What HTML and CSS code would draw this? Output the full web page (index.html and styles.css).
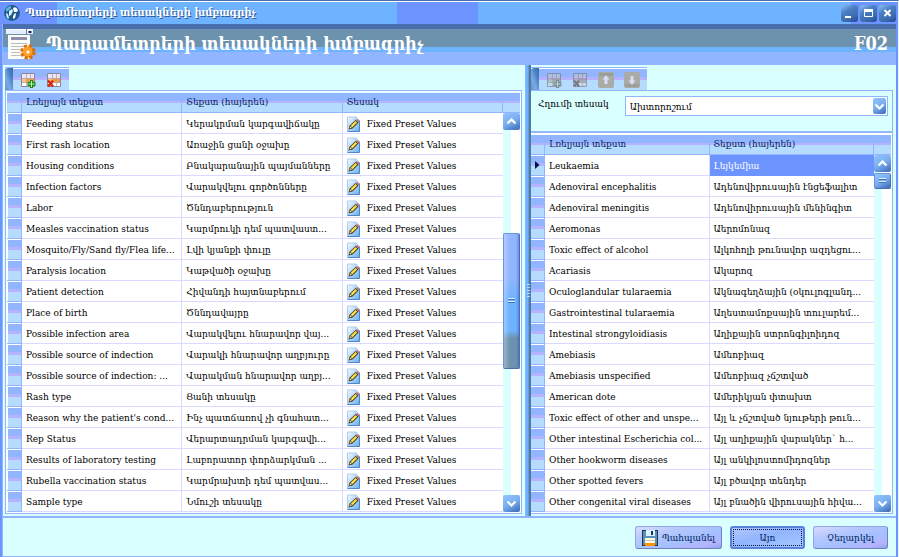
FILE: index.html
```html
<!DOCTYPE html>
<html lang="hy">
<head>
<meta charset="utf-8">
<meta name="viewport" content="width=device-width, initial-scale=1">
<title>Պարամետրերի տեսակների խմբագրիչ</title>
<link rel="stylesheet" href="styles.css">
</head>
<body>
<svg class="defs" aria-hidden="true">
  <defs>
    <linearGradient id="page-fill" x1="0" y1="0" x2="1" y2="1">
      <stop offset="0" stop-color="#f4fbff"/><stop offset="1" stop-color="#6aaef0"/>
    </linearGradient>
    <symbol id="edit" viewBox="0 0 13 16">
      <path d="M.5 1h8.500l3.500 3.500v11H.5z" fill="url(#page-fill)" stroke="#a9cdf0"/>
      <path d="M12.500 4.500v11H.5" fill="none" stroke="#4a86c8"/>
      <path d="M9 1v3.500h3.500z" fill="#fff" stroke="#8bb8e0" stroke-width=".6"/>
      <path d="M1.500 13.500l1.200-4 6-5.500 2.800 2.500-6 6z" fill="#3b3318"/>
      <path d="M3.600 9.800l5-4.800 1.600 1.500-5 5z" fill="#ffe14a"/>
      <path d="M8.800 4l1.200-1.200 2.500 2.400-1.200 1.200z" fill="#c76a7e"/>
      <path d="M3.200 10.200l1.600 1.500-2.300.9z" fill="#f8e4b8"/>
    </symbol>
    <symbol id="grid-base" viewBox="0 0 15 15">
      <path d="M.5.5h13v13H.5z" fill="#fff" stroke="#8b8797"/>
      <path d="M1 5h12v5H1z" fill="#f9c583"/>
      <path d="M5 5h8v5H5z" fill="#f59a45"/>
      <path d="M1 1h12v4H1z" fill="#e9e6fa"/>
      <path d="M5.500 1v12M9.500 1v12M1 5.500h12M1 9.500h12" stroke="#b9a6a6" fill="none" stroke-width=".8"/>
    </symbol>
    <symbol id="grid-add" viewBox="0 0 15 15">
      <use href="#grid-base" width="15" height="15"/>
      <path d="M9 7h3v2h2.500v4H12v2H9v-2H6.500V9H9z" fill="#1c8a1e"/>
      <path d="M10 8h1v2.500h2.500v1H11V14h-1v-2.500H7.500v-1H10z" fill="#b4ff9c"/>
    </symbol>
    <symbol id="grid-del" viewBox="0 0 15 15">
      <use href="#grid-base" width="15" height="15"/>
      <path d="M1 7.500l5 6M6 7.500l-5 6" stroke="#d62a12" stroke-width="2.400"/>
    </symbol>
    <symbol id="arrow-tile" viewBox="0 0 16 16">
      <rect width="16" height="16" rx="2" fill="#a9aca6"/>
      <path d="M1 1h14v3H1z" fill="#9a9e98"/>
      <path d="M8 3l3.500 4.500H9.500V12h-3V7.500h-2z" fill="#dcdcf5"/>
    </symbol>
    <symbol id="chev-down" viewBox="0 0 11 7">
      <path d="M1.500 1.500l4 4 4-4" fill="none" stroke="#fff" stroke-width="2.200"/>
    </symbol>
  </defs>
</svg>

<div class="window">
  <header class="titlebar">
    <svg class="globe" viewBox="0 0 16 16" aria-hidden="true">
      <circle cx="8" cy="8" r="7.900" fill="#1f5a8e"/>
      <path d="M2 4q2-3 5-3l0 2-3 3-2 1z" fill="#5fb4d8"/>
      <path d="M9 3q3-2 5 2l-1 2-3 0z" fill="#fff"/>
      <path d="M5 6l3-2 1 2-2 4-2 1z" fill="#d7f6ff"/>
      <path d="M2 8l2 1 1 4-1 1q-2-2-2-6z" fill="#c9f4ff"/>
      <path d="M9 11l2-3 1 1-1 4-2 1z" fill="#fff"/>
    </svg>
    <h1 class="caption">Պարամետրերի տեսակների խմբագրիչ</h1>
    <div class="controls">
      <button class="wbtn" aria-label="Minimize"><svg viewBox="0 0 17 17"><path d="M4 11h6v2H4z" fill="#fff"/></svg></button>
      <button class="wbtn" aria-label="Maximize"><svg viewBox="0 0 17 17"><path d="M4.500 4.500h8v7h-8z" fill="none" stroke="#fff"/><path d="M4 4h9v3H4z" fill="#fff"/></svg></button>
      <button class="wbtn" aria-label="Close"><svg viewBox="0 0 17 17"><path d="M5.500 5l6 6M11.500 5l-6 6" stroke="#fff" stroke-width="2"/></svg></button>
    </div>
  </header>

  <div class="frame">
    <div class="banner">
      <svg class="banner-icon" viewBox="0 0 30 32" aria-hidden="true">
        <path d="M0 1h27v5H0z" fill="#e6efff"/><path d="M0 1h27v1H0z" fill="#fff"/>
        <path d="M20 1h1v5h-1z" fill="#6a7ca8"/><path d="M22.500 3h3v2h-3z" fill="#1b2440"/>
        <path d="M2 7h22v24H2z" fill="#fbfbf7"/>
        <path d="M5 9h16v3H5z" fill="#8e90ac"/>
        <path d="M5 15.500h16M5 18.500h13M5 21.500h10M5 24.500h9M5 27.500h10" stroke="#b9bfc0" fill="none"/>
        <circle cx="22" cy="24" r="5.500" fill="#f48a10"/>
        <circle cx="22" cy="24" r="6" fill="none" stroke="#d96f00" stroke-width="3.400" stroke-dasharray="3 1.710"/>
        <circle cx="21.500" cy="23.500" r="4.800" fill="#ffa02c"/>
        <circle cx="22" cy="24" r="1.600" fill="#fff"/>
      </svg>
      <h2 class="banner-title">Պարամետրերի տեսակների խմբագրիչ</h2>
      <span class="banner-code">F02</span>
    </div>

    <main class="panes">
      <section class="pane">
        <div class="toolbar">
          <span class="grip"></span>
          <button class="tool" aria-label="Ավելացնել"><svg viewBox="0 0 15 15"><use href="#grid-add"/></svg></button>
          <button class="tool" aria-label="Ջնջել"><svg viewBox="0 0 15 15"><use href="#grid-del"/></svg></button>
        </div>
        <div class="box">
          <div class="gridview">
            <table class="grid">
              <colgroup><col class="c-ind"><col><col><col></colgroup>
              <thead><tr><th></th><th>Լռելյայն տեքստ</th><th>Տեքստ (հայերեն)</th><th>Տեսակ</th></tr></thead>
              <tbody>
                <tr><th></th><td>Feeding status</td><td>Կերակրման կարգավիճակը</td><td><svg class="ed"><use href="#edit"/></svg>Fixed Preset Values</td></tr>
                <tr><th></th><td>First rash location</td><td>Առաջին ցանի օջախը</td><td><svg class="ed"><use href="#edit"/></svg>Fixed Preset Values</td></tr>
                <tr><th></th><td>Housing conditions</td><td>Բնակարանային պայմանները</td><td><svg class="ed"><use href="#edit"/></svg>Fixed Preset Values</td></tr>
                <tr><th></th><td>Infection factors</td><td>Վարակվելու գործոնները</td><td><svg class="ed"><use href="#edit"/></svg>Fixed Preset Values</td></tr>
                <tr><th></th><td>Labor</td><td>Ծննդաբերություն</td><td><svg class="ed"><use href="#edit"/></svg>Fixed Preset Values</td></tr>
                <tr><th></th><td>Measles vaccination status</td><td>Կարմրուկի դեմ պատվաստ...</td><td><svg class="ed"><use href="#edit"/></svg>Fixed Preset Values</td></tr>
                <tr><th></th><td>Mosquito/Fly/Sand fly/Flea life...</td><td>Լվի կյանքի փուլը</td><td><svg class="ed"><use href="#edit"/></svg>Fixed Preset Values</td></tr>
                <tr><th></th><td>Paralysis location</td><td>Կաթվածի օջախը</td><td><svg class="ed"><use href="#edit"/></svg>Fixed Preset Values</td></tr>
                <tr><th></th><td>Patient detection</td><td>Հիվանդի հայտնաբերում</td><td><svg class="ed"><use href="#edit"/></svg>Fixed Preset Values</td></tr>
                <tr><th></th><td>Place of birth</td><td>Ծննդավայրը</td><td><svg class="ed"><use href="#edit"/></svg>Fixed Preset Values</td></tr>
                <tr><th></th><td>Possible infection area</td><td>Վարակվելու հնարավոր վայ...</td><td><svg class="ed"><use href="#edit"/></svg>Fixed Preset Values</td></tr>
                <tr><th></th><td>Possible source of indection</td><td>Վարակի հնարավոր աղբյուրը</td><td><svg class="ed"><use href="#edit"/></svg>Fixed Preset Values</td></tr>
                <tr><th></th><td>Possible source of indection: ...</td><td>Վարակման հնարավոր աղբյ...</td><td><svg class="ed"><use href="#edit"/></svg>Fixed Preset Values</td></tr>
                <tr><th></th><td>Rash type</td><td>Ցանի տեսակը</td><td><svg class="ed"><use href="#edit"/></svg>Fixed Preset Values</td></tr>
                <tr><th></th><td>Reason why the patient's cond...</td><td>Ինչ պատճառով չի գնահատ...</td><td><svg class="ed"><use href="#edit"/></svg>Fixed Preset Values</td></tr>
                <tr><th></th><td>Rep Status</td><td>Վերարտադրման կարգավի...</td><td><svg class="ed"><use href="#edit"/></svg>Fixed Preset Values</td></tr>
                <tr><th></th><td>Results of laboratory testing</td><td>Լաբորատոր փորձարկման ...</td><td><svg class="ed"><use href="#edit"/></svg>Fixed Preset Values</td></tr>
                <tr><th></th><td>Rubella vaccination status</td><td>Կարմրախտի դեմ պատվաս...</td><td><svg class="ed"><use href="#edit"/></svg>Fixed Preset Values</td></tr>
                <tr><th></th><td>Sample type</td><td>Նմուշի տեսակը</td><td><svg class="ed"><use href="#edit"/></svg>Fixed Preset Values</td></tr>
              </tbody>
            </table>
            <div class="scroll">
              <div class="cap"></div>
              <button class="sbtn up" aria-label="Վեր"><svg viewBox="0 0 11 7"><use href="#chev-down"/></svg></button>
              <div class="track track-left"><div class="thumb"></div></div>
              <button class="sbtn" aria-label="Վար"><svg viewBox="0 0 11 7"><use href="#chev-down"/></svg></button>
            </div>
          </div>
        </div>
      </section>

      <div class="splitter"><span class="dots"></span></div>

      <section class="pane pane-right">
        <div class="toolbar">
          <span class="grip"></span>
          <button class="tool off" disabled aria-label="Ավելացնել"><svg viewBox="0 0 15 15"><use href="#grid-add"/></svg></button>
          <button class="tool off" disabled aria-label="Ջնջել"><svg viewBox="0 0 15 15"><use href="#grid-del"/></svg></button>
          <button class="tool" disabled aria-label="Վեր"><svg class="tile" viewBox="0 0 16 16"><use href="#arrow-tile"/></svg></button>
          <button class="tool" disabled aria-label="Վար"><svg class="tile flip" viewBox="0 0 16 16"><use href="#arrow-tile"/></svg></button>
        </div>
        <div class="box box-right">
          <div class="filter">
            <label for="ref">Հղումի տեսակ</label>
            <div class="combo">
              <select id="ref"><option>Ախտորոշում</option></select>
              <span class="combo-btn"><svg viewBox="0 0 11 7"><use href="#chev-down"/></svg></span>
            </div>
          </div>
          <div class="gridview">
            <table class="grid">
              <colgroup><col class="c-ind"><col><col></colgroup>
              <thead><tr><th></th><th>Լռելյայն տեքստ</th><th>Տեքստ (հայերեն)</th></tr></thead>
              <tbody>
                <tr><th><svg class="cursor" viewBox="0 0 5 8"><path d="M0 0l4.500 4L0 8z" fill="#00144a"/></svg></th><td>Leukaemia</td><td class="selected">Լեյկեմիա</td></tr>
                <tr><th></th><td>Adenoviral encephalitis</td><td>Ադենովիրուսային էնցեֆալիտ</td></tr>
                <tr><th></th><td>Adenoviral meningitis</td><td>Ադենովիրուսային մենինգիտ</td></tr>
                <tr><th></th><td>Aeromonas</td><td>Աերոմոնազ</td></tr>
                <tr><th></th><td>Toxic effect of alcohol</td><td>Ալկոհոլի թունավոր ազդեցու...</td></tr>
                <tr><th></th><td>Acariasis</td><td>Ակարոզ</td></tr>
                <tr><th></th><td>Oculoglandular tularaemia</td><td>Ակնագեղձային (օկուլոգլանդ...</td></tr>
                <tr><th></th><td>Gastrointestinal tularaemia</td><td>Աղեստամոքսային տուլարեմ...</td></tr>
                <tr><th></th><td>Intestinal strongyloidiasis</td><td>Աղիքային ստրոնգիլոիդոզ</td></tr>
                <tr><th></th><td>Amebiasis</td><td>Ամեոբիազ</td></tr>
                <tr><th></th><td>Amebiasis unspecified</td><td>Ամեոբիազ չճշտված</td></tr>
                <tr><th></th><td>American dote</td><td>Ամերիկյան փտախտ</td></tr>
                <tr><th></th><td>Toxic effect of other and unspe...</td><td>Այլ և չճշտված նյութերի թուն...</td></tr>
                <tr><th></th><td>Other intestinal Escherichia col...</td><td>Այլ աղիքային վարակներ` հ...</td></tr>
                <tr><th></th><td>Other hookworm diseases</td><td>Այլ անկիլոստոմիդոզներ</td></tr>
                <tr><th></th><td>Other spotted fevers</td><td>Այլ բծավոր տենդեր</td></tr>
                <tr><th></th><td>Other congenital viral diseases</td><td>Այլ բնածին վիրուսային հիվա...</td></tr>
              </tbody>
            </table>
            <div class="scroll">
              <div class="cap"></div>
              <button class="sbtn up" aria-label="Վեր"><svg viewBox="0 0 11 7"><use href="#chev-down"/></svg></button>
              <div class="track"><div class="thumb thumb-small"></div></div>
              <button class="sbtn" aria-label="Վար"><svg viewBox="0 0 11 7"><use href="#chev-down"/></svg></button>
            </div>
          </div>
        </div>
      </section>
    </main>

    <footer class="actions">
      <button class="btn btn-save">
        <svg viewBox="0 0 16 16" aria-hidden="true">
          <path d="M0 0h16v16H0z" fill="#1d3352"/><path d="M1 1h14v14H1z" fill="#5d8fb8"/>
          <path d="M4 0h9v6H4z" fill="#d8f4ff"/><path d="M9 1h2v4H9z" fill="#1d3352"/>
          <path d="M3 8h10v8H3z" fill="#fffbe0"/><path d="M3 10h10v1H3z" fill="#c8cdb0"/>
          <path d="M3 13h10v3H3z" fill="#ff9200"/>
        </svg>Պահպանել</button>
      <button class="btn btn-default">Այո</button>
      <button class="btn">Չեղարկել</button>
    </footer>
  </div>
</div>
</body>
</html>
```
FILE: styles.css
```css
:root {
  --line: #92b5ff;
  --deep: #6d93ff;
  --sky: #6db3ff;
  --pale: #b5dbff;
  --lilac: #b5b3ff;
  --row-line: #dad9ff;
  --surface: #daffff;
  --navy: #00245a;
  --band: linear-gradient(var(--line) 0 42%, var(--lilac) 42% 54%, var(--pale) 54%);
  --tile: linear-gradient(150deg, #92c5ff 0, #7aaeee 50%, #4a7cc8 85%, #4a6dad 100%);
}

* { box-sizing: border-box; }

body {
  margin: 0;
  font: 10px/14px "DejaVu Serif Condensed", "DejaVu Serif", serif;
  color: #000;
  background: var(--surface);
}

button, select {
  font: inherit;
  color: inherit;
  margin: 0;
  padding: 0;
  border: 0;
  background: none;
}

svg { display: block; }
.defs { position: absolute; width: 0; height: 0; }

.window {
  border-top: 1px solid #4a6dad;
  border-right: 1px solid #eaf4ff;
  background: var(--deep);
  min-height: 100vh;
}

.titlebar {
  display: flex;
  align-items: center;
  height: 23px;
  padding: 0 2px 0 4px;
  border-top: 1px solid #fff;
  background: linear-gradient(90deg, var(--deep) 57px, var(--sky) 57px 397px, var(--deep) 397px 478px, var(--sky) 478px calc(100% - 47px), var(--deep) calc(100% - 47px));
}
.globe { width: 16px; height: 16px; }
.caption {
  flex: 1;
  margin: 0 0 0 5px;
  font-size: 11px;
  line-height: 16px;
  font-weight: bold;
  color: #fff;
  text-shadow: 1px 1px 0 #2f5596;
}
.controls { display: flex; gap: 2px; }
.wbtn {
  width: 17px;
  height: 17px;
  border-radius: 3px;
  background: linear-gradient(150deg, #8fc0f5 0, #4a80c4 35%, #3c6cae 70%, #24499a 100%);
}

.frame {
  margin: 0 2px;
  border-left: 1px solid var(--line);
  background: var(--surface);
}

.banner {
  display: flex;
  align-items: flex-start;
  height: 41px;
  padding: 4px 8px 0 3px;
  background: linear-gradient(#4a6dad 0 5px, #6d92ad 5px 23px, var(--sky) 23px 28px, var(--line) 28px);
}
.banner-icon { width: 30px; height: 32px; }
.banner-title, .banner-code {
  margin: 0;
  font-size: 18px;
  line-height: 32px;
  font-weight: bold;
  color: #fff;
  white-space: nowrap;
}
.banner-title { flex: 1; margin-left: 10px; }

.panes {
  display: grid;
  grid-template-columns: minmax(0, 522fr) 6px minmax(0, 365fr);
  border-bottom: 2px solid var(--line);
}
.pane { padding: 2px 3px 2px 2px; }
.pane-right { padding-left: 0; }

.toolbar {
  display: flex;
  align-items: stretch;
  width: fit-content;
  height: 23px;
  padding-right: 4px;
  border-top: 1px solid var(--line);
  box-shadow: inset 0 1px #fff;
  background: var(--band);
}
.grip {
  width: 8px;
  border-radius: 3px 0 0 0;
  background: linear-gradient(70deg, #6d93c8 0, #7aa8e8 35%, #4a80c0 70%, #3c68a0);
}
.tool {
  display: flex;
  align-items: center;
  justify-content: flex-end;
  width: 26px;
  padding: 2px 3px 0 0;
}
.tool svg { width: 15px; height: 15px; }
.tool .tile { width: 16px; height: 16px; }
.tool .flip { transform: rotate(180deg); }
.off svg { filter: grayscale(.85) brightness(.85); opacity: .6; }

.box {
  border: 1px solid var(--line);
  box-shadow: inset 0 0 0 1px #fff;
  padding: 2px 1px 1px 1px;
}
.box-right { border-left: 0; padding: 0; box-shadow: none; }
.box-right .gridview { border-top: 2px solid var(--line); padding: 2px 1px 1px 0; background: #fff; }

.gridview {
  display: grid;
  grid-template-columns: minmax(0, 1fr) 17px;
}
.grid {
  width: 100%;
  border-collapse: separate;
  border-spacing: 0;
  table-layout: fixed;
  background: #fff;
}
.c-ind { width: 15px; }
.pane-right .c-ind { width: 14px; }
.grid th, .grid td {
  height: 21px;
  padding: 2px 4px 0;
  font-weight: normal;
  text-align: left;
  white-space: nowrap;
  overflow: hidden;
  border-right: 1px solid var(--row-line);
  border-bottom: 1px solid var(--row-line);
}
.grid td:last-child { border-right: 0; padding-right: 0; }
.grid thead th {
  height: 20px;
  padding: 0 4px 2px;
  color: var(--navy);
  background: var(--band);
  border-color: var(--line);
}
.grid tbody th {
  padding: 0 5px;
  background: var(--band);
  border-color: var(--line);
  box-shadow: inset 1px 1px #fff;
}
.pane-right .grid tbody th { padding: 0 4px; box-shadow: inset 0 1px #fff; }
.grid .selected { background: var(--deep); color: #fff; border-bottom-color: var(--deep); }
.cursor { width: 5px; height: 8px; }
.ed {
  display: inline-block;
  width: 13px;
  height: 16px;
  margin-right: 7px;
  vertical-align: middle;
}

.scroll { display: flex; flex-direction: column; }
.cap { height: 20px; background: var(--band); border-bottom: 1px solid var(--line); }
.sbtn, .combo-btn {
  display: flex;
  align-items: center;
  justify-content: center;
  width: 17px;
  height: 17px;
  border-radius: 2px;
  background: var(--tile);
}
.sbtn svg, .combo-btn svg { width: 11px; height: 7px; }
.up svg { transform: rotate(180deg); }
.track { flex: 1; background: linear-gradient(90deg, var(--surface) 8px, #fff 8px); }
.track-left { display: grid; grid-template-rows: 103fr 136fr 126fr; }
.track-left .thumb { grid-row: 2; }
.thumb {
  display: flex;
  align-items: center;
  justify-content: center;
  border: 1px solid #6d93d8;
  border-right-color: #4a6dad;
  border-bottom-color: #4a6dad;
  border-radius: 2px;
  background: linear-gradient(90deg, rgba(255,255,255,.3), transparent 40% 80%, rgba(50,80,170,.4)), linear-gradient(var(--line) 0 32%, var(--sky) 50% 72%, #6d92ad 78%);
}
.thumb::before {
  content: "";
  width: 7px;
  height: 6px;
  background: repeating-linear-gradient(#d9f0ff 0 1px, #4a6dad 1px 2px, transparent 2px 3px);
}
.thumb-small { height: 16px; margin-top: 1px; background: var(--tile); }

.splitter {
  display: flex;
  align-items: center;
  background: linear-gradient(90deg, var(--line) 1px, var(--sky) 1px 3px, #6d9ad0 3px 4px, #4a7ca8 4px);
}
.dots {
  width: 3px;
  height: 14px;
  margin-left: 2px;
  background: repeating-linear-gradient(#b5dbff 0 1px, transparent 1px 3px);
}

.filter {
  display: flex;
  align-items: flex-start;
  gap: 16px;
  height: 40px;
  padding: 5px 4px 0 7px;
}
.filter label { line-height: 16px; white-space: nowrap; }
.combo { position: relative; flex: 1; }
.combo select {
  display: block;
  width: 100%;
  height: 20px;
  padding: 2px 22px 0 4px;
  border: 1px solid var(--line);
  background: #fff;
  appearance: none;
}
.combo-btn {
  position: absolute;
  top: 2px;
  right: 2px;
  width: 13px;
  height: 16px;
  pointer-events: none;
}

.actions {
  display: flex;
  justify-content: flex-end;
  gap: 8px;
  padding: 8px 8px 7px;
  border-bottom: 1px solid var(--line);
}
.btn {
  display: flex;
  align-items: center;
  justify-content: center;
  width: 75px;
  height: 23px;
  border: 1px solid #92a5e8;
  border-right-color: #6d80c0;
  border-bottom-color: #6d80c0;
  border-radius: 3px;
  color: var(--navy);
  background: linear-gradient(165deg, #dbdbff 0, #b5c8ff 30%, #a5c0ff 60%, #b5b3ff 85%, #92a5e8 100%);
}
.btn-save { width: 87px; gap: 4px; }
.btn-save svg { width: 16px; height: 16px; }
.btn-default {
  border: 2px solid #5a80d8;
  outline: 1px dotted #001450;
  outline-offset: -4px;
  background: linear-gradient(165deg, #b5c8ff 0, #92b5ff 45%, #a5c8ff 100%);
}
```
